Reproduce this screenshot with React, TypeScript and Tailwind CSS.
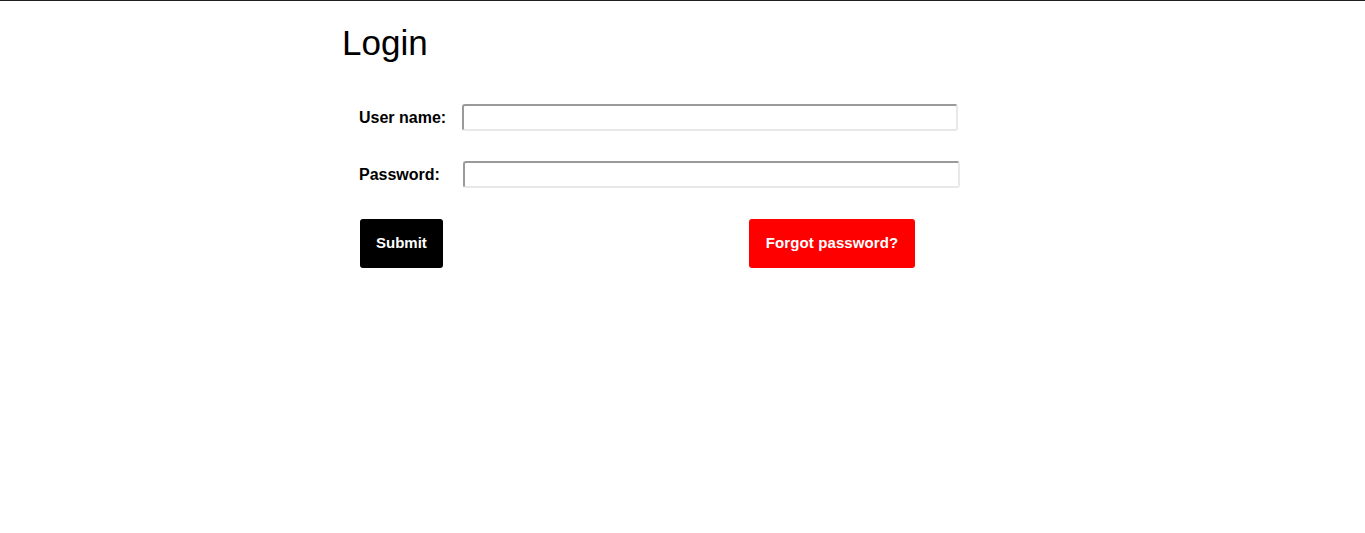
import React from 'react';

const inputClass =
  'h-[27px] w-[496px] rounded-[3px] border-2 border-t-[#9a9a9a] border-l-[#9a9a9a] border-r-[#e8e8e8] border-b-[#e8e8e8] bg-white px-1 text-sm outline-none';

export default function App() {
  return (
    <div className="min-h-[533px] border-t border-[#1e1e1e] bg-white text-black font-['Liberation_Sans',Arial,sans-serif]">
      <div className="mx-auto w-[681px]">
        <h1 className="mt-[21px] text-[35px] leading-[41px] font-normal">Login</h1>

        <form className="pl-[17px] pt-[41px]" onSubmit={(e) => e.preventDefault()}>
          <div className="flex items-center">
            <label htmlFor="username" className="text-[16px] font-bold">
              User name:
            </label>
            <input id="username" type="text" className={`ml-[16px] ${inputClass}`} />
          </div>

          <div className="mt-[30px] flex items-center">
            <label htmlFor="password" className="text-[16px] font-bold">
              Password:
            </label>
            <input id="password" type="password" className={`ml-[23px] w-[497px] ${inputClass}`} />
          </div>

          <div className="mt-[31px] flex items-start">
            <button
              type="submit"
              className="ml-px h-[49px] rounded-[3px] bg-black px-4 text-[15px] font-bold text-white"
            >
              Submit
            </button>
            <button
              type="button"
              className="ml-[306px] h-[49px] rounded-[3px] bg-[#ff0000] px-[17px] text-[15px] tracking-[0.1px] font-bold text-white"
            >
              Forgot password?
            </button>
          </div>
        </form>
      </div>
    </div>
  );
}
